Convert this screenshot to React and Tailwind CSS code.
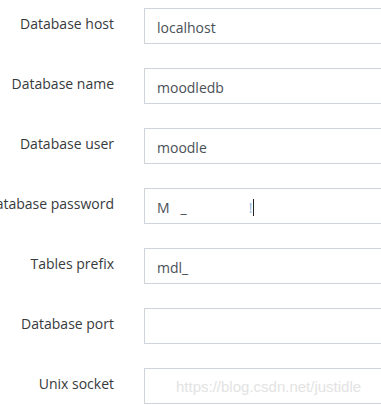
import React from 'react';

const fields = [
  { label: 'Database host', value: 'localhost' },
  { label: 'Database name', value: 'moodledb' },
  { label: 'Database user', value: 'moodle' },
  { label: 'Database password', value: 'password' },
  { label: 'Tables prefix', value: 'mdl_' },
  { label: 'Database port', value: '' },
  { label: 'Unix socket', value: '', watermark: true },
];

function PasswordValue() {
  return (
    <span className="flex items-center">
      <span>M</span>
      <span className="ml-[11px]">_</span>
      <span className="ml-[62px] text-[#8fb4e0]">!</span>
      <span className="ml-[1px] inline-block h-[17px] w-px bg-[#222]" />
    </span>
  );
}

export default function App() {
  return (
    <div className="w-[381px] h-[405px] overflow-hidden bg-white pt-2 font-['Open_Sans',sans-serif]">
      <div className="flex flex-col gap-6">
        {fields.map((f) => (
          <div key={f.label} className="flex items-start">
            <label className="w-[114px] shrink-0 whitespace-nowrap flex justify-end pt-[6px] text-[14px] leading-5 text-[#373a3c]">
              {f.label}
            </label>
            <div className="ml-[30px] h-9 w-[300px] shrink-0 border border-[#ced4da] px-3 flex items-center text-[14px] text-[#495057] pt-[2px]">
              {f.label === 'Database password' ? (
                <PasswordValue />
              ) : (
                <span>{f.value}</span>
              )}
              {f.watermark && (
                <span className="ml-[19px] text-[15px] font-['Liberation_Sans',sans-serif] text-[#e3e3e3]">
                  https://blog.csdn.net/justidle
                </span>
              )}
            </div>
          </div>
        ))}
      </div>
    </div>
  );
}
